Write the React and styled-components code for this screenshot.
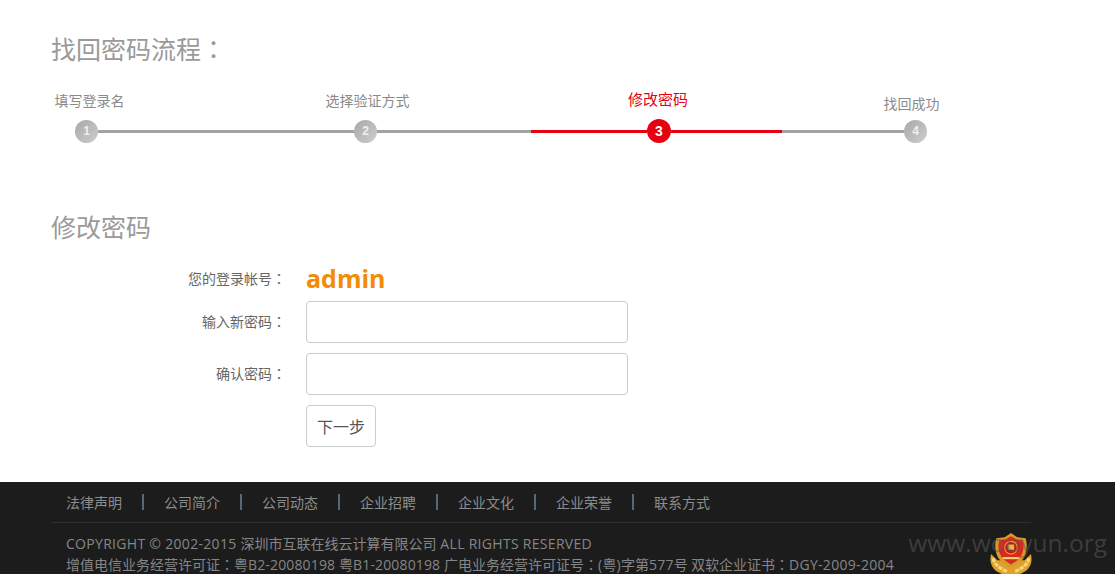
import React from 'react';
import styled, { createGlobalStyle } from 'styled-components';

const GlobalStyle = createGlobalStyle`
    html, body {
        margin: 0;
        padding: 0;
        background: #ffffff;
        font-family: "Noto Sans CJK SC", "Open Sans", sans-serif;
    }
`;

const steps = [
    { label: '填写登录名', shift: 3, lift: 33 },
    { label: '选择验证方式', shift: 2, lift: 33 },
    { label: '修改密码', shift: -1, lift: 34, active: true },
    { label: '找回成功', shift: -4, lift: 30 },
];

const links = ['法律声明', '公司简介', '公司动态', '企业招聘', '企业文化', '企业荣誉', '联系方式'];

const Emblem = () => (
    <EmblemSvg viewBox="0 0 40 42" aria-hidden="true">
        <path d="M1 20c-2 8 1 15 8 18 4 2 8 3 11 4 3-1 7-2 11-4 7-3 10-10 8-18l-6 6H7z" fill="#e0a02c" />
        <path d="M3 24c1 6 6 10 14 13M37 24c-1 6-6 10-14 13" fill="none" stroke="#f8d97a" strokeWidth="3" strokeDasharray="4 1" />
        <path d="M20 0l6 4 8 1c2 6 1 14-2 19-3 4-8 7-12 9-4-2-9-5-12-9C5 19 4 11 6 5l8-1z" fill="#d89a28" />
        <path d="M20 3l5 3 6 1c2 5 1 11-2 16-2 3-6 5-9 7-3-2-7-4-9-7-3-5-4-11-2-16l6-1z" fill="#d9281e" />
        <circle cx="20" cy="14" r="6" fill="#b81c14" stroke="#e8a92f" strokeWidth="1" />
        <rect x="17" y="11" width="6" height="5" fill="#e8b93f" />
        <path d="M12 24h16" stroke="#f2d37a" strokeWidth="2" />
    </EmblemSvg>
);

export default function App() {
    return (
        <>
            <GlobalStyle />
            <Page>
                <Main>
                    <PageTitle>
                        找回密码流程<Colon>：</Colon>
                    </PageTitle>
                    <Stepper>
                        {steps.map((step, i) => (
                            <React.Fragment key={step.label}>
                                <Step>
                                    <StepLabel $active={step.active} $shift={step.shift} $lift={step.lift}>
                                        {step.label}
                                    </StepLabel>
                                    <StepDot $active={step.active}>{i + 1}</StepDot>
                                </Step>
                                {i === 0 && <Line $width={256} />}
                                {i === 1 && (
                                    <>
                                        <Line $width={154} />
                                        <Line $width={116} $active />
                                    </>
                                )}
                                {i === 2 && (
                                    <>
                                        <Line $width={111} $active />
                                        <Line $width={122} />
                                    </>
                                )}
                            </React.Fragment>
                        ))}
                    </Stepper>
                    <SectionTitle>修改密码</SectionTitle>
                    <Form>
                        <AccountRow>
                            <AccountLabel>
                                您的登录帐号<Colon>：</Colon>
                            </AccountLabel>
                            <Account>admin</Account>
                        </AccountRow>
                        <FieldRow>
                            <FieldLabel>
                                输入新密码<Colon>：</Colon>
                            </FieldLabel>
                            <TextInput type="password" />
                        </FieldRow>
                        <FieldRow>
                            <FieldLabel>
                                确认密码<Colon>：</Colon>
                            </FieldLabel>
                            <TextInput type="password" />
                        </FieldRow>
                        <FieldRow>
                            <FieldLabel />
                            <NextButton type="button">下一步</NextButton>
                        </FieldRow>
                    </Form>
                </Main>
                <Footer>
                    <FooterInner>
                        <FooterLinks>
                            {links.map((link) => (
                                <FooterLink key={link} href="#">
                                    {link}
                                </FooterLink>
                            ))}
                        </FooterLinks>
                        <FooterBottom>
                            <Copyright>
                                <div>
                                    <Latin>COPYRIGHT © 2002-2015 </Latin>深圳市互联在线云计算有限公司<Latin> ALL RIGHTS RESERVED</Latin>
                                </div>
                                <div>
                                    增值电信业务经营许可证<Colon>：</Colon>粤<Latin $tight>B2-20080198 </Latin>粤<Latin $tight>B1-20080198 </Latin>广电业务经营许可证号<Colon>：</Colon><Latin>(</Latin>粤<Latin>)</Latin>字第<Latin>577</Latin>号 双软企业证书<Colon>：</Colon><Latin>DGY-2009-2004</Latin>
                                </div>
                            </Copyright>
                            <Emblem />
                        </FooterBottom>
                    </FooterInner>
                    <Watermark>www.wooyun.org</Watermark>
                </Footer>
            </Page>
        </>
    );
}

const Page = styled.div`
    display: flex;
    flex-direction: column;
    height: 574px;
    overflow: hidden;
`;

const Main = styled.main`
    flex: 1;
    padding: 31px 0 0 51px;
`;

const PageTitle = styled.h2`
    margin: 0;
    font-size: 25px;
    line-height: 34px;
    font-weight: 400;
    color: #9a9a9a;
`;

/* the TC cut centres the full-width colon, as the reference does */
const Colon = styled.span`
    font-family: "Noto Sans CJK TC", sans-serif;
`;

const Latin = styled.span`
    font-family: "Open Sans", sans-serif;
    letter-spacing: ${(p) => (p.$tight ? '0.15px' : '0.3px')};
    white-space: pre;
`;

const Stepper = styled.div`
    display: flex;
    align-items: center;
    height: 24px;
    margin: 54px 0 0 24px;
`;

const Step = styled.div`
    position: relative;
    flex: none;
`;

const StepLabel = styled.span`
    position: absolute;
    bottom: ${(p) => p.$lift}px;
    left: 50%;
    transform: translateX(calc(-50% + ${(p) => p.$shift}px));
    white-space: nowrap;
    font-size: ${(p) => (p.$active ? '15px' : '14px')};
    line-height: 20px;
    color: ${(p) => (p.$active ? '#e60012' : '#8a8a8a')};
`;

const StepDot = styled.div`
    display: flex;
    align-items: center;
    justify-content: center;
    width: ${(p) => (p.$active ? '24px' : '23px')};
    height: ${(p) => (p.$active ? '24px' : '23px')};
    border-radius: 50%;
    font-family: "Liberation Sans", sans-serif;
    font-size: ${(p) => (p.$active ? '14px' : '12px')};
    font-weight: 700;
    color: ${(p) => (p.$active ? '#ffffff' : '#efefef')};
    background: ${(p) => (p.$active ? '#e60012' : 'linear-gradient(135deg, #a8a8a8, #cdcdcd)')};
`;

const Line = styled.div`
    flex: none;
    width: ${(p) => p.$width}px;
    height: 3px;
    background: ${(p) => (p.$active ? '#e60012' : '#a3a3a3')};
`;

const SectionTitle = styled.h3`
    margin: 66px 0 0;
    font-size: 25px;
    line-height: 34px;
    font-weight: 400;
    color: #9a9a9a;
`;

const Form = styled.form`
    display: flex;
    flex-direction: column;
    gap: 10px;
    margin-top: 19px;
`;

const FieldRow = styled.div`
    display: flex;
    align-items: center;
    gap: 20px;
`;

const AccountRow = styled(FieldRow)`
    height: 32px;
    margin-bottom: -3px;
`;

const FieldLabel = styled.label`
    flex: none;
    width: 235px;
    padding-bottom: 2px;
    text-align: right;
    font-size: 14px;
    line-height: 20px;
    color: #666666;
`;

const AccountLabel = styled(FieldLabel)`
    padding-bottom: 0;
`;

const Account = styled.span`
    font-family: "Open Sans", sans-serif;
    font-size: 25px;
    font-weight: 700;
    line-height: 32px;
    color: #f28c06;
`;

const TextInput = styled.input`
    box-sizing: border-box;
    width: 322px;
    height: 42px;
    padding: 0 12px;
    background: #ffffff;
    border: 1px solid #cccccc;
    border-radius: 4px;
    outline: none;
`;

const NextButton = styled.button`
    box-sizing: border-box;
    width: 70px;
    height: 42px;
    padding: 0;
    background: #ffffff;
    border: 1px solid #cccccc;
    border-radius: 4px;
    font-family: inherit;
    font-size: 16px;
    color: #555555;
`;

const Footer = styled.footer`
    position: relative;
    flex: none;
    height: 92px;
    background: #1c1c1c;
    overflow: hidden;
`;

const FooterInner = styled.div`
    width: 980px;
    margin-left: 51px;
`;

const FooterLinks = styled.nav`
    display: flex;
    align-items: center;
    height: 40px;
    padding-left: 15px;
    border-bottom: 1px solid #303030;
`;

const FooterLink = styled.a`
    font-size: 14px;
    line-height: 16px;
    color: #8c8c8c;
    text-decoration: none;

    & + & {
        margin-left: 20px;
        padding-left: 20px;
        border-left: 2px solid #56697a;
    }
`;

const FooterBottom = styled.div`
    display: flex;
    justify-content: space-between;
    align-items: flex-start;
    padding: 10px 0 0 15px;
`;

const Copyright = styled.div`
    font-size: 14px;
    line-height: 20px;
    color: #868686;
    white-space: nowrap;
`;

const EmblemSvg = styled.svg`
    flex: none;
    width: 42px;
    height: 44px;
    margin-right: -1px;
`;

const Watermark = styled.div`
    position: absolute;
    right: 8px;
    top: 43px;
    font-family: "Open Sans", sans-serif;
    font-size: 24.5px;
    line-height: 36px;
    color: rgba(90, 90, 90, 0.55);
`;
